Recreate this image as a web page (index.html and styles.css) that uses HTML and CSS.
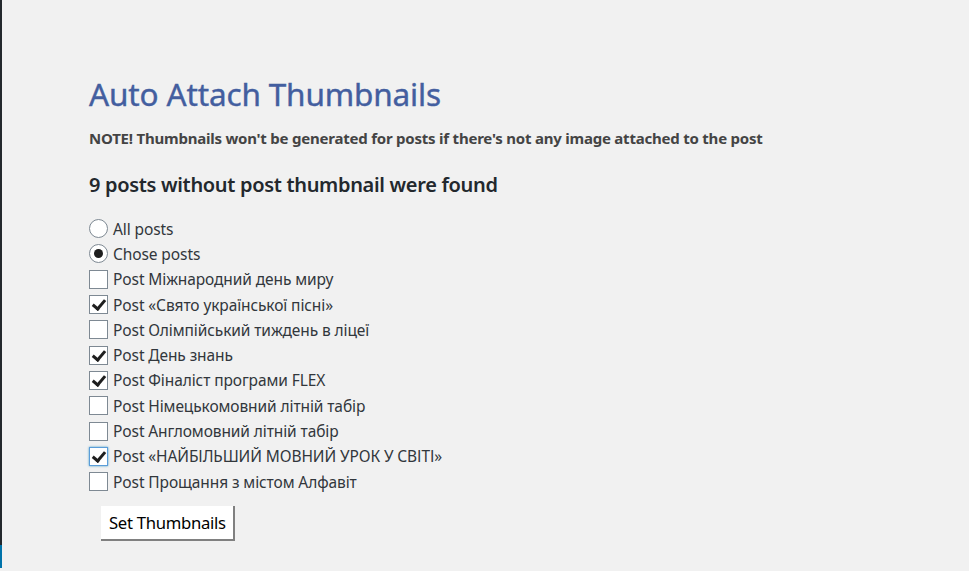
FILE: index.html
```html
<!DOCTYPE html>
<html>
<head>
<meta charset="utf-8">
<link rel="stylesheet" href="styles.css">
</head>
<body>
<div class="sidebar"><div class="sidebar-active"></div></div>
<main class="wrap">
  <h1 class="title">Auto Attach Thumbnails</h1>
  <p class="note">NOTE! Thumbnails won't be generated for posts if there's not any image attached to the post</p>
  <h2 class="count">9 posts without post thumbnail were found</h2>
  <form class="list">
    <label class="row"><input type="radio" name="mode" class="radio"><span>All posts</span></label>
    <label class="row"><input type="radio" name="mode" class="radio" checked><span>Chose posts</span></label>
    <label class="row"><input type="checkbox" class="check"><span>Post Міжнародний день миру</span></label>
    <label class="row"><input type="checkbox" class="check" checked><span>Post «Свято української пісні»</span></label>
    <label class="row"><input type="checkbox" class="check"><span>Post Олімпійський тиждень в ліцеї</span></label>
    <label class="row"><input type="checkbox" class="check" checked><span>Post День знань</span></label>
    <label class="row"><input type="checkbox" class="check" checked><span>Post Фіналіст програми FLEX</span></label>
    <label class="row"><input type="checkbox" class="check"><span>Post Німецькомовний літній табір</span></label>
    <label class="row"><input type="checkbox" class="check"><span>Post Англомовний літній табір</span></label>
    <label class="row"><input type="checkbox" class="check focus" checked><span>Post «НАЙБІЛЬШИЙ МОВНИЙ УРОК У СВІТІ»</span></label>
    <label class="row"><input type="checkbox" class="check"><span>Post Прощання з містом Алфавіт</span></label>
    <button type="button" class="btn">Set Thumbnails</button>
  </form>
</main>
</body>
</html>
```
FILE: styles.css
```css
* { box-sizing: border-box; }
html, body { margin: 0; height: 100%; }
body {
  background: #f1f1f1;
  display: flex;
  font-family: "Noto Sans", "Open Sans", sans-serif;
  color: #444;
  overflow: hidden;
}
.sidebar {
  width: 2px;
  background: #23282d;
  height: 568px;
  display: flex;
  flex-direction: column;
  justify-content: flex-end;
}
.sidebar-active {
  height: 23px;
  background: #0073aa;
}
.wrap {
  padding: 72px 0 0 87px;
}
.title {
  margin: 0;
  font-size: 31.5px;
  font-weight: 400;
  line-height: 44px;
  color: #435e9f;
  letter-spacing: -0.15px;
  -webkit-text-stroke: 0.4px #435e9f;
}
.note {
  margin: 12px 0 0;
  font-size: 15px;
  font-weight: 700;
  line-height: 20px;
  color: #444;
  letter-spacing: -0.22px;
}
.count {
  margin: 23px 0 0;
  font-size: 20px;
  font-weight: 600;
  line-height: 28px;
  color: #23282d;
  letter-spacing: -0.32px;
}
.list {
  margin-top: 17px;
  display: flex;
  flex-direction: column;
  align-items: flex-start;
}
.row {
  display: flex;
  align-items: center;
  height: 25.3px;
  font-size: 15.5px;
  color: #32373c;
  letter-spacing: -0.1px;
}
.row span { margin-left: 5px; }
.radio, .check {
  -webkit-appearance: none;
  appearance: none;
  margin: 0;
  width: 19px;
  height: 19px;
  border: 1px solid #7e8993;
  background: #fff;
  position: relative;
}
.radio { border-radius: 50%; }
.radio:checked::after {
  content: "";
  position: absolute;
  left: 4px; top: 4px;
  width: 9px; height: 9px;
  border-radius: 50%;
  background: #1e1e1e;
}
.check:checked::after {
  content: "";
  position: absolute;
  left: 5px; top: 1px;
  width: 5px; height: 10px;
  border: solid #1e1e1e;
  border-width: 0 3px 3px 0;
  transform: rotate(40deg);
}
.check.focus {
  border-color: #5b9dd9;
  box-shadow: 0 0 2px rgba(30,140,190,.8);
}
.btn {
  margin: 12px 0 0 12px;
  height: 35px;
  padding: 0 7px 0 8px;
  background: #fff;
  border: none;
  border-right: 2px solid #808080;
  border-bottom: 2px solid #808080;
  font-family: "Noto Sans", "Open Sans", sans-serif;
  font-size: 16.7px;
  color: #000;
  letter-spacing: -0.3px;
}
```
